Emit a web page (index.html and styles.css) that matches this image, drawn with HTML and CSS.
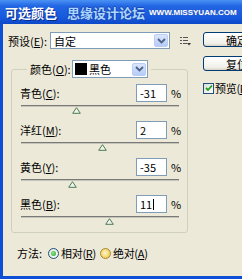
FILE: index.html
```html
<!DOCTYPE html>
<html lang="zh-CN">

<head>
    <meta charset="UTF-8">
    <title>可选颜色</title>
    <link rel="stylesheet" href="styles.css">
</head>

<body>

    <div class="window">
        <div class="titlebar">
            <span class="title">可选颜色</span>
            <span class="mark-cn">思缘设计论坛</span>
            <span class="mark-en">WWW.MISSYUAN.COM</span>
        </div>

        <div class="frame">
            <div class="main">
                <div class="preset-row">
                    <span class="preset-label">预设(<u>E</u>):</span>
                    <div class="select preset-select">
                        <span class="select-text">自定</span>
                        <span class="drop">
                            <svg width="9" height="6" viewBox="0 0 9 6"><path d="M1 1 L4.5 4.5 L8 1" fill="none" stroke="#4d6185" stroke-width="1.8"/></svg>
                        </span>
                    </div>
                    <svg class="menu-icon" width="11" height="10" viewBox="0 0 11 10">
                        <rect x="0" y="1" width="2" height="1" fill="#555"/>
                        <rect x="3" y="1" width="5" height="1" fill="#555"/>
                        <rect x="0" y="4" width="2" height="1" fill="#555"/>
                        <rect x="3" y="4" width="5" height="1" fill="#555"/>
                        <rect x="0" y="7" width="2" height="1" fill="#555"/>
                        <rect x="3" y="7" width="4" height="1" fill="#555"/>
                        <path d="M7 7 L11 7 L9 9.5 Z" fill="#333"/>
                    </svg>
                </div>

                <fieldset class="group">
                    <legend class="group-legend">
                        <span class="legend-inner">
                            <span class="legend-label">颜色(<u>O</u>):</span>
                            <span class="select color-select">
                                <span class="swatch"></span>
                                <span class="select-text">黑色</span>
                                <span class="drop">
                                    <svg width="9" height="6" viewBox="0 0 9 6"><path d="M1 1 L4.5 4.5 L8 1" fill="none" stroke="#4d6185" stroke-width="1.8"/></svg>
                                </span>
                            </span>
                        </span>
                    </legend>

                    <div class="slider-row">
                        <div class="slider-top">
                            <span class="slider-label">青色(<u>C</u>):</span>
                            <span class="num-input">-31</span>
                            <span class="pct">%</span>
                        </div>
                        <div class="track">
                            <svg class="thumb" style="left: 34.5%" width="9" height="7" viewBox="0 0 9 7"><path d="M4.5 0.7 L8.3 6.3 L0.7 6.3 Z" fill="#eef6ec" stroke="#4c7a55" stroke-width="1"/></svg>
                        </div>
                    </div>

                    <div class="slider-row">
                        <div class="slider-top">
                            <span class="slider-label">洋红(<u>M</u>):</span>
                            <span class="num-input">2</span>
                            <span class="pct">%</span>
                        </div>
                        <div class="track">
                            <svg class="thumb" style="left: 51%" width="9" height="7" viewBox="0 0 9 7"><path d="M4.5 0.7 L8.3 6.3 L0.7 6.3 Z" fill="#eef6ec" stroke="#4c7a55" stroke-width="1"/></svg>
                        </div>
                    </div>

                    <div class="slider-row">
                        <div class="slider-top">
                            <span class="slider-label">黄色(<u>Y</u>):</span>
                            <span class="num-input">-35</span>
                            <span class="pct">%</span>
                        </div>
                        <div class="track">
                            <svg class="thumb" style="left: 32.5%" width="9" height="7" viewBox="0 0 9 7"><path d="M4.5 0.7 L8.3 6.3 L0.7 6.3 Z" fill="#eef6ec" stroke="#4c7a55" stroke-width="1"/></svg>
                        </div>
                    </div>

                    <div class="slider-row">
                        <div class="slider-top">
                            <span class="slider-label">黑色(<u>B</u>):</span>
                            <span class="num-input">11<span class="caret"></span></span>
                            <span class="pct">%</span>
                        </div>
                        <div class="track">
                            <svg class="thumb" style="left: 55.5%" width="9" height="7" viewBox="0 0 9 7"><path d="M4.5 0.7 L8.3 6.3 L0.7 6.3 Z" fill="#eef6ec" stroke="#4c7a55" stroke-width="1"/></svg>
                        </div>
                    </div>
                </fieldset>

                <div class="method-row">
                    <span class="method-label">方法:</span>
                    <span class="radio radio-on"><span class="dot"></span></span>
                    <span class="radio-text">相对(<u>R</u>)</span>
                    <span class="radio radio-hover"></span>
                    <span class="radio-text">绝对(<u>A</u>)</span>
                </div>
            </div>

            <div class="side">
                <div class="btn">确定</div>
                <div class="btn btn-reset">复位</div>
                <div class="check-row">
                    <span class="checkbox">
                        <svg width="8" height="8" viewBox="0 0 8 8"><path d="M1 4 L3 6 L7 1.5" fill="none" stroke="#21a121" stroke-width="1.8"/></svg>
                    </span>
                    <span class="check-text">预览(<u>P</u>)</span>
                </div>
            </div>
        </div>
    </div>

</body>

</html>
```

FILE: styles.css
```css
* {
    box-sizing: border-box;
}

body {
    margin: 0;
    font-family: "Noto Sans CJK SC", "Liberation Sans", sans-serif;
    font-size: 11px;
    color: #000;
    background: #ece9d8;
}

u {
    text-decoration: underline;
}

.window {
    width: 242px;
    height: 279px;
    overflow: hidden;
    display: flex;
    flex-direction: column;
}

.titlebar {
    flex: none;
    height: 24px;
    display: flex;
    align-items: center;
    padding-left: 5px;
    white-space: nowrap;
    color: #fff;
    background: linear-gradient(#4a92f4, #2266e4 25%, #1558de 75%, #0d48c6);
}

.title {
    font-weight: bold;
    font-size: 13px;
    text-shadow: 1px 1px 0 #0a2b8a;
}

.mark-cn {
    margin-left: 10px;
    font-size: 13px;
    font-weight: bold;
    color: #a9d8ff;
    text-shadow: -1px 0 0 #1d46b8, 1px 0 0 #1d46b8, 0 -1px 0 #1d46b8, 0 1px 0 #1d46b8;
}

.mark-en {
    margin-left: 4px;
    font-family: "Liberation Sans", sans-serif;
    font-size: 8px;
    font-weight: bold;
    color: #fff;
    text-shadow: -1px 0 0 #2a5ed0, 1px 0 0 #2a5ed0, 0 -1px 0 #2a5ed0, 0 1px 0 #2a5ed0;
}

.frame {
    flex: 1;
    display: flex;
    border-left: 3px solid #0c4fd6;
    border-bottom: 3px solid #0c4fd6;
    background: #ece9d8;
}

.main {
    flex: none;
    width: 200px;
}

.side {
    flex: none;
    width: 80px;
}

/* preset row */
.preset-row {
    margin-top: 8px;
    height: 17px;
    display: flex;
    align-items: center;
    padding-left: 5px;
}

.preset-label {
    width: 42px;
}

.select {
    display: flex;
    align-items: center;
    height: 17px;
    background: #fff;
    border: 1px solid #7f9db9;
    padding: 0 1px 0 3px;
}

.preset-select {
    width: 120px;
}

.select-text {
    flex: 1;
}

.drop {
    width: 14px;
    height: 13px;
    display: flex;
    align-items: center;
    justify-content: center;
    border-radius: 2px;
    border: 1px solid #b9cdf7;
    background: linear-gradient(#dbe6fd, #b6cbf7);
}

.menu-icon {
    margin-left: 10px;
}

/* colour group */
.group {
    margin: 11px 0 0 8px;
    width: 177px;
    min-width: 0;
    padding: 0 8px 7px 8px;
    border: 1px solid #d0d0bf;
    border-radius: 3px;
}

.group-legend {
    margin-left: 7px;
    padding: 0 3px;
}

.legend-inner {
    display: flex;
    align-items: center;
    height: 18px;
}

.legend-label {
    width: 42px;
}

.color-select {
    width: 76px;
    height: 18px;
    padding-left: 2px;
}

.swatch {
    width: 12px;
    height: 12px;
    background: #000;
    margin-right: 2px;
}

.slider-row {
    margin-top: 7px;
    height: 30px;
}

.slider-row:first-of-type {
    margin-top: 6px;
}

.slider-top {
    display: flex;
    align-items: center;
    height: 18px;
}

.slider-label {
    flex: 1;
}

.num-input {
    width: 31px;
    height: 18px;
    display: flex;
    align-items: center;
    padding-left: 3px;
    background: #fff;
    border: 1px solid #7f9db9;
}

.caret {
    width: 1px;
    height: 11px;
    margin-left: 1px;
    background: #000;
}

.pct {
    width: 8px;
    margin-left: 4px;
}

.track {
    position: relative;
    margin: 3px 0 0 1px;
    width: 158px;
    height: 2px;
    border-top: 1px solid #7a7a7a;
    border-bottom: 1px solid #c4c4b8;
}

.thumb {
    position: absolute;
    top: 1px;
    margin-left: -4px;
}

/* method row */
.method-row {
    margin-top: 12px;
    height: 16px;
    display: flex;
    align-items: center;
    padding-left: 14px;
}

.method-label {
    width: 31px;
}

.radio {
    width: 11px;
    height: 11px;
    border-radius: 50%;
    border: 1px solid #1c5180;
    background: radial-gradient(circle at 60% 60%, #ffffff, #dcdcd4);
    display: flex;
    align-items: center;
    justify-content: center;
    margin-right: 2px;
}

.radio-on .dot {
    width: 5px;
    height: 5px;
    border-radius: 50%;
    background: radial-gradient(circle at 40% 40%, #8fe48a, #21a121);
}

.radio-text {
    letter-spacing: -0.3px;
}

.radio-hover {
    margin-left: 4px;
    border-color: #a68a2c;
    background: radial-gradient(circle at 45% 45%, #fff6d0, #f2cf5c 70%, #e0a824);
}

/* side buttons */
.btn {
    margin-top: 8px;
    width: 68px;
    height: 15px;
    display: flex;
    align-items: center;
    justify-content: center;
    border: 1px solid #003c74;
    border-radius: 3px;
    background: linear-gradient(#ffffff, #f0f0ea 80%, #d6d0c5);
}

.btn-reset {
    margin-top: 9px;
}

.check-row {
    margin-top: 11px;
    display: flex;
    align-items: center;
    height: 12px;
    white-space: nowrap;
}

.checkbox {
    flex: none;
    width: 11px;
    height: 11px;
    margin-right: 1px;
    border: 1px solid #1c5180;
    background: linear-gradient(135deg, #dcdcd7, #ffffff);
    display: flex;
    align-items: center;
    justify-content: center;
}

.check-text {
    letter-spacing: -0.3px;
}
```
